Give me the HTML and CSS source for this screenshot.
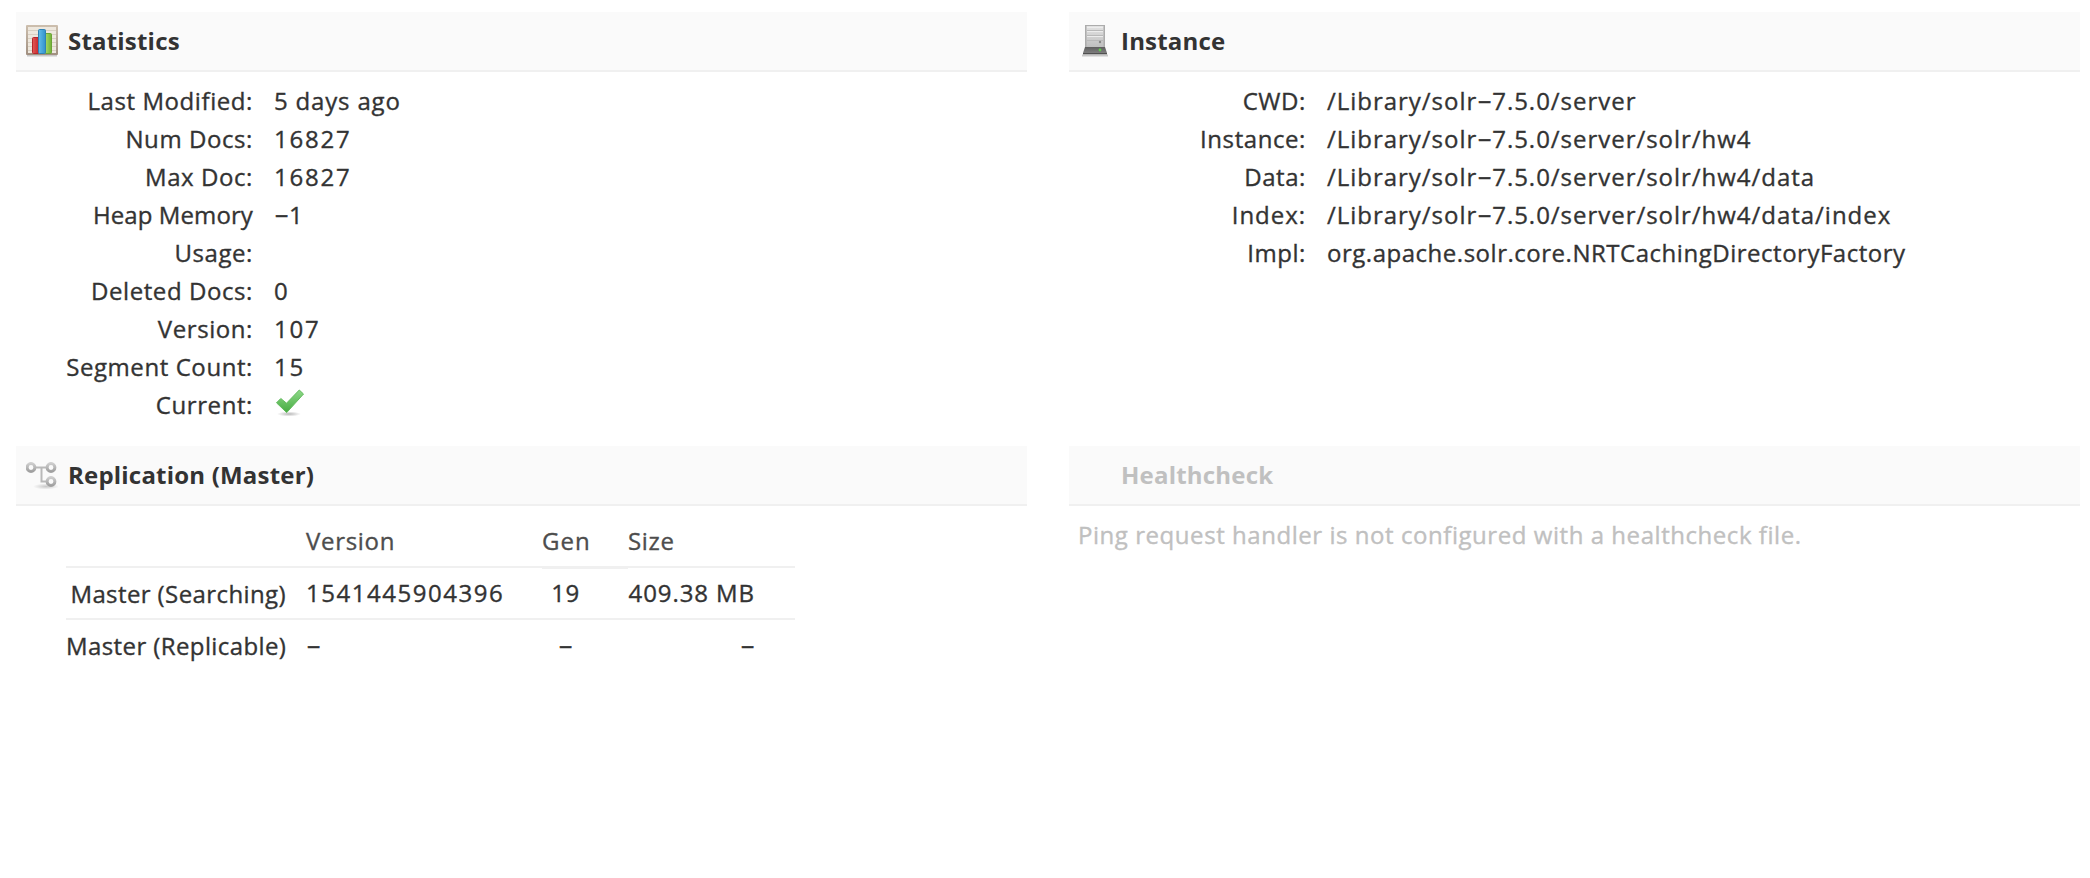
FILE: index.html
```html
<!DOCTYPE html>
<html lang="en">
<head>
<meta charset="utf-8">
<title>Core Overview</title>
<link rel="stylesheet" href="styles.css">
</head>
<body>
<main class="dashboard">
  <section class="block">
    <h2 class="title">
      <svg class="icon" viewBox="0 0 32 32">
        <defs>
          <linearGradient id="frame" x1="0" y1="0" x2="0" y2="1"><stop offset="0" stop-color="#cdbfae"/><stop offset="1" stop-color="#a08f80"/></linearGradient>
          <linearGradient id="red" x1="0" y1="0" x2="1" y2="0"><stop offset="0" stop-color="#e25a55"/><stop offset="1" stop-color="#c4232b"/></linearGradient>
          <linearGradient id="blue" x1="0" y1="0" x2="1" y2="0"><stop offset="0" stop-color="#62bdea"/><stop offset="1" stop-color="#3291cb"/></linearGradient>
          <linearGradient id="green" x1="0" y1="0" x2="1" y2="0"><stop offset="0" stop-color="#a9db6c"/><stop offset="1" stop-color="#72b235"/></linearGradient>
        </defs>
        <path d="M1 30.500h30" stroke="#000" stroke-opacity=".2" stroke-width="2"/>
        <rect x="0" y="0" width="32" height="30" rx="1" fill="url(#frame)"/>
        <rect x="2" y="2" width="28" height="26" fill="#eee8de"/>
        <path d="M2 5.500h28M2 9.500h28M2 13.500h28M2 17.500h28M2 21.500h28M2 25.500h28" stroke="#d9d0c2"/>
        <rect x="6.500" y="12.500" width="6.500" height="16" rx="1" fill="url(#red)" stroke="#b5262b"/>
        <rect x="19" y="8.500" width="6.500" height="20" rx="1" fill="url(#green)" stroke="#6ba336"/>
        <rect x="12.500" y="4.500" width="7" height="24" rx="1" fill="url(#blue)" stroke="#2f82b5"/>
      </svg>
      Statistics
    </h2>
    <dl class="facts">
      <dt>Last Modified:</dt><dd class="plain">5 days ago</dd>
      <dt>Num Docs:</dt><dd>16827</dd>
      <dt>Max Doc:</dt><dd>16827</dd>
      <dt><span class="tight">Heap Memory</span> Usage:</dt><dd><span class="dash">-</span>1</dd>
      <dt>Deleted Docs:</dt><dd>0</dd>
      <dt>Version:</dt><dd>107</dd>
      <dt>Segment Count:</dt><dd>15</dd>
      <dt>Current:</dt>
      <dd class="check">
        <svg class="tick" viewBox="0 0 32 32">
          <defs>
            <linearGradient id="tick" x1="0" y1="0" x2="0" y2="1"><stop offset="0" stop-color="#8fd989"/><stop offset="1" stop-color="#46ab41"/></linearGradient>
            <radialGradient id="shade"><stop offset="0" stop-color="#000" stop-opacity=".28"/><stop offset="1" stop-color="#000" stop-opacity="0"/></radialGradient>
          </defs>
          <ellipse cx="15" cy="26" rx="12" ry="2.500" fill="url(#shade)"/>
          <path d="M2.500 14.800l4.300-4.300 5.700 4.700L25.300 2l4.200 4-16.800 18.600z" fill="url(#tick)" stroke="#62bb5c" stroke-linejoin="round"/>
        </svg>
      </dd>
    </dl>
  </section>

  <section class="block">
    <h2 class="title">
      <svg class="icon" viewBox="0 0 32 32">
        <defs>
          <linearGradient id="case" x1="0" y1="0" x2="0" y2="1"><stop offset="0" stop-color="#e2e2e2"/><stop offset="1" stop-color="#bfbfbf"/></linearGradient>
          <linearGradient id="base" x1="0" y1="0" x2="0" y2="1"><stop offset="0" stop-color="#5e5e5e"/><stop offset="1" stop-color="#858585"/></linearGradient>
        </defs>
        <path d="M3 30.500h26" stroke="#000" stroke-opacity=".2" stroke-width="2"/>
        <path d="M6 0h20v23H6z" fill="#acacac"/>
        <path d="M7.500 1h17v21h-17z" fill="url(#case)"/>
        <path d="M8 5.500h16M8 10.500h16M8 15.500h16" stroke="#b9b9b9"/>
        <path d="M8 2.500h16M8 6.500h16M8 11.500h16" stroke="#ececec"/>
        <circle cx="21" cy="17" r="1.200" fill="#888"/>
        <path d="M6 22h20l2 6v1.500H4V28z" fill="url(#base)"/>
        <path d="M4 28.500h24" stroke="#505050"/>
        <circle cx="21" cy="25" r="1.400" fill="#62c94e"/>
      </svg>
      Instance
    </h2>
    <dl class="facts facts-instance">
      <dt>CWD:</dt><dd>/Library/solr<span class="dash">-</span>7.5.0/server</dd>
      <dt>Instance:</dt><dd>/Library/solr<span class="dash">-</span>7.5.0/server/solr/hw4</dd>
      <dt>Data:</dt><dd>/Library/solr<span class="dash">-</span>7.5.0/server/solr/hw4/data</dd>
      <dt class="wide">Index:</dt><dd>/Library/solr<span class="dash">-</span>7.5.0/server/solr/hw4/data/index</dd>
      <dt>Impl:</dt><dd class="impl">org.apache.solr.core.NRTCachingDirectoryFactory</dd>
    </dl>
  </section>

  <section class="block">
    <h2 class="title">
      <svg class="icon" viewBox="0 0 32 32">
        <defs>
          <linearGradient id="ring" x1="0" y1="0" x2="0" y2="1"><stop offset="0" stop-color="#cdcdcd"/><stop offset="1" stop-color="#a0a0a0"/></linearGradient>
          <radialGradient id="soft"><stop offset="0" stop-color="#000" stop-opacity=".2"/><stop offset="1" stop-color="#000" stop-opacity="0"/></radialGradient>
        </defs>
        <ellipse cx="20" cy="27.500" rx="13" ry="3" fill="url(#soft)"/>
        <path d="M9 8.500h12M15.500 8.500v14H21" fill="none" stroke="#b9b9b9" stroke-width="2"/>
        <g fill="#fafafa" stroke="url(#ring)" stroke-width="3">
          <circle cx="5" cy="8.500" r="3.900"/><circle cx="25" cy="8.500" r="3.900"/><circle cx="25" cy="22.500" r="3.900"/>
        </g>
      </svg>
      Replication (Master)
    </h2>
    <div class="replication">
      <div class="row head"><span></span><span>Version</span><span class="gen">Gen</span><span>Size</span></div>
      <div class="row"><span class="name">Master (Searching)</span><span class="ver">1541445904396</span><span class="gen">19</span><span class="size">409.38 MB</span></div>
      <div class="row last"><span class="name">Master (Replicable)</span><span class="ver"><span class="dash">-</span></span><span class="gen"><span class="dash">-</span></span><span class="size"><span class="dash">-</span></span></div>
    </div>
  </section>

  <section class="block disabled">
    <h2 class="title"><span class="icon"></span>Healthcheck</h2>
    <p class="message">Ping request handler is not configured with a healthcheck file.</p>
  </section>
</main>
</body>
</html>
```
FILE: styles.css
```css
* { box-sizing: border-box; }

body {
  margin: 0;
  background: #fff;
  color: #333;
  font: 24px/38px "Open Sans", "Noto Sans", sans-serif;
  letter-spacing: 0.58px;
  -webkit-text-stroke: 0.35px currentColor;
}

h2, dl, dd, p { margin: 0; }

.dashboard {
  display: grid;
  grid-template-columns: 1011px 1011px;
  grid-template-rows: 434px 1fr;
  column-gap: 42px;
  height: 878px;
  padding: 12px 10px 0 16px;
}

.title {
  display: flex;
  align-items: center;
  gap: 10px;
  height: 60px;
  padding: 0 10px;
  border-bottom: 2px solid #f0f0f0;
  background: #fafafa;
  font-size: 24px;
  font-weight: bold;
  letter-spacing: 0.2px;
  -webkit-text-stroke-width: 0;
}

.icon { width: 32px; height: 32px; flex: none; }

.facts {
  display: grid;
  grid-template-columns: 237px 1fr;
  column-gap: 21px;
  padding-top: 10px;
}

.facts dt { padding-left: 40px; text-align: right; }
.facts dd { white-space: nowrap; letter-spacing: 1.75px; }
.facts dd.plain { letter-spacing: 0.82px; }
.facts-instance dd { letter-spacing: 0.97px; }
.facts dd.impl { letter-spacing: 0.52px; }
.tight { letter-spacing: 0.1px; }
.wide { letter-spacing: 0.97px; }

.dash {
  display: inline-block;
  width: 15px;
  letter-spacing: 0;
  text-align: center;
  transform: translateY(-1px) scaleX(1.9);
}

.check { display: flex; align-items: flex-start; padding-top: 2px; height: 38px; }
.tick { width: 32px; height: 32px; }

.replication { width: 729px; margin: 16px 0 0 50px; }
.row { display: grid; grid-template-columns: 240px 236px 86px 167px; }
.row > span { height: 52px; padding-top: 6px; border-bottom: 2px solid #f0f0f0; white-space: nowrap; }
.row .name { padding-top: 7px; padding-right: 20px; text-align: right; letter-spacing: 0.4px; }
.row .ver { letter-spacing: 1.53px; }
.row .gen { padding-right: 39px; text-align: center; }
.row .size { padding-right: 40px; text-align: right; letter-spacing: 0.91px; }
.row.last > span { padding-top: 7px; border-bottom: 0; }

.head { color: #4d4d4d; }
.row.head > span { height: 46px; padding-top: 0; letter-spacing: 0.7px; }
.row.head > .gen { height: 47px; margin-bottom: -1px; border-bottom-width: 3px; letter-spacing: 1px; }

.disabled { color: #c0c0c0; }
.message { padding: 10px 9px 0; letter-spacing: 0.55px; }
```
